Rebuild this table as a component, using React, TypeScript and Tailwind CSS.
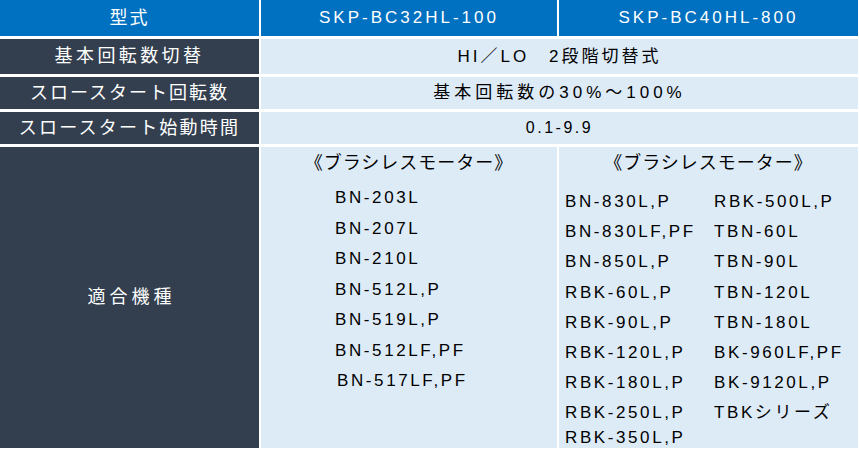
const FONT = "font-['Liberation_Sans','Noto_Sans_CJK_JP',sans-serif]";

const SMALL_LIST = [
  "BN-203L",
  "BN-207L",
  "BN-210L",
  "BN-512L,P",
  "BN-519L,P",
  "BN-512LF,PF",
  "BN-517LF,PF",
];

const LARGE_LEFT = [
  "BN-830L,P",
  "BN-830LF,PF",
  "BN-850L,P",
  "RBK-60L,P",
  "RBK-90L,P",
  "RBK-120L,P",
  "RBK-180L,P",
  "RBK-250L,P",
];

const LARGE_RIGHT = [
  "RBK-500L,P",
  "TBN-60L",
  "TBN-90L",
  "TBN-120L",
  "TBN-180L",
  "BK-960LF,PF",
  "BK-9120L,P",
  "TBKシリーズ",
];

function Label({ children, track }: { children: React.ReactNode; track: string }) {
  return (
    <div className={`bg-[#333f4f] text-white text-[18px] flex items-center justify-center ${track}`}>
      {children}
    </div>
  );
}

function Value({ children, track }: { children: React.ReactNode; track: string }) {
  return (
    <div className={`col-span-2 bg-[#ddebf7] text-black flex items-center justify-center ${track}`}>
      {children}
    </div>
  );
}

function Heading() {
  return (
    <div className="h-[30px] text-[18px] tracking-[1px] flex items-center justify-center">
      《ブラシレスモーター》
    </div>
  );
}

export default function App() {
  return (
    <div className={`w-[859px] h-[451px] bg-white ${FONT}`}>
      <div className="grid grid-cols-[259px_296px_299px] grid-rows-[36px_35px_32px_32px_301px] gap-x-[2px] gap-y-[3px]">
        {/* header */}
        <div className="bg-[#0070c0] text-white text-[18px] tracking-[2px] flex items-center justify-center">
          型式
        </div>
        <div className="bg-[#0070c0] text-white text-[17px] tracking-[3px] flex items-center justify-center">
          SKP-BC32HL-100
        </div>
        <div className="bg-[#0070c0] text-white text-[17px] tracking-[3px] flex items-center justify-center">
          SKP-BC40HL-800
        </div>

        <Label track="tracking-[3.4px]">基本回転数切替</Label>
        <Value track="text-[17px] tracking-[3px]">HI／LO　2段階切替式</Value>

        <Label track="tracking-[2px]">スロースタート回転数</Label>
        <Value track="text-[17px] tracking-[4px]">基本回転数の30%～100%</Value>

        <Label track="tracking-[2.2px]">スロースタート始動時間</Label>
        <Value track="text-[16px] tracking-[2.5px]">0.1-9.9</Value>

        {/* compatible models */}
        <Label track="tracking-[4px] pl-[4px]">適合機種</Label>

        <div className="bg-[#ddebf7] text-black pt-[1px]">
          <Heading />
          <div className="mt-[5px] pl-[74px] text-[17px] tracking-[2.6px]">
            {SMALL_LIST.map((m, i) => (
              <div key={m} className={`leading-[30.5px] ${i === SMALL_LIST.length - 1 ? "ml-[2px]" : ""}`}>
                {m}
              </div>
            ))}
          </div>
        </div>

        <div className="bg-[#ddebf7] text-black pt-[1px] overflow-hidden">
          <Heading />
          <div className="mt-[9px] pl-[6px] flex text-[17px] tracking-[2.6px]">
            <div className="w-[149px]">
              {LARGE_LEFT.map((m) => (
                <div key={m} className="leading-[30.2px]">{m}</div>
              ))}
              <div className="leading-[18px]">RBK-350L,P</div>
            </div>
            <div>
              {LARGE_RIGHT.map((m) => (
                <div key={m} className="leading-[30.2px]">{m}</div>
              ))}
            </div>
          </div>
        </div>
      </div>
    </div>
  );
}
